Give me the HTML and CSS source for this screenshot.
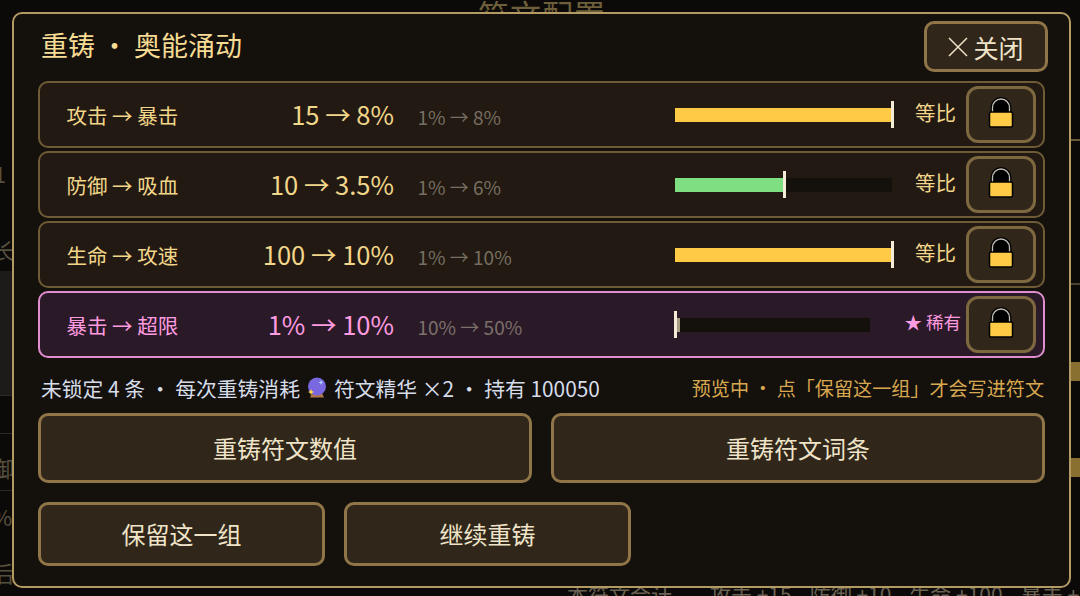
FILE: index.html
```html
<!DOCTYPE html>
<html lang="zh">
<head>
<meta charset="utf-8">
<title>重铸</title>
<link rel="stylesheet" href="styles.css">
</head>
<body>
<div class="backdrop">
  <div class="bg-title">符文配置</div>
  <div class="bg-panel"></div>
  <div class="bg-line l1"></div>
  <div class="bg-line l2"></div>
  <div class="bg-line l3"></div>
  <div class="bg-line r3"></div>
  <div class="bg-line r4"></div>
  <div class="bg-left b1">1</div>
  <div class="bg-left b2">长</div>
  <div class="bg-left b3">御</div>
  <div class="bg-left b4">%</div>
  <div class="bg-left b5">后</div>
  <div class="bg-bar r1"></div>
  <div class="bg-bar r2"></div>
  <div class="bg-sum">
    <span class="s0">本符文合计</span><span class="s1">攻击 +15</span><span class="s1">防御 +10</span><span class="s1">生命 +100</span><span class="s1">暴击 +</span>
  </div>
</div>
<main class="dialog">
  <header class="head">
    <h1 class="title">重铸 ・ 奥能涌动</h1>
    <button class="btn close"><svg class="x" viewBox="0 0 20 20"><path d="M1 1L19 19M19 1L1 19"/></svg>关闭</button>
  </header>
  <section class="rows">
    <div class="row">
      <span class="label">攻击 → 暴击</span><span class="val">15 → 8%</span><span class="range">1% → 8%</span>
      <span class="bar"><i class="fill gold w100"></i><i class="tick"></i></span>
      <span class="tag">等比</span>
      <button class="lock"><svg viewBox="0 0 26 30"><path class="shackle-o" d="M4.500 15V9.500a8.500 8.500 0 0 1 17 0V15z"/><path class="shackle" d="M4.500 14V9.500a8.500 8.500 0 0 1 17 0V14"/><rect class="body" x="1.500" y="14" width="23" height="15" rx="1.500"/></svg></button>
    </div>
    <div class="row">
      <span class="label">防御 → 吸血</span><span class="val">10 → 3.5%</span><span class="range">1% → 6%</span>
      <span class="bar"><i class="fill green w50"></i><i class="tick"></i></span>
      <span class="tag">等比</span>
      <button class="lock"><svg viewBox="0 0 26 30"><path class="shackle-o" d="M4.500 15V9.500a8.500 8.500 0 0 1 17 0V15z"/><path class="shackle" d="M4.500 14V9.500a8.500 8.500 0 0 1 17 0V14"/><rect class="body" x="1.500" y="14" width="23" height="15" rx="1.500"/></svg></button>
    </div>
    <div class="row">
      <span class="label">生命 → 攻速</span><span class="val">100 → 10%</span><span class="range">1% → 10%</span>
      <span class="bar"><i class="fill gold w100"></i><i class="tick"></i></span>
      <span class="tag">等比</span>
      <button class="lock"><svg viewBox="0 0 26 30"><path class="shackle-o" d="M4.500 15V9.500a8.500 8.500 0 0 1 17 0V15z"/><path class="shackle" d="M4.500 14V9.500a8.500 8.500 0 0 1 17 0V14"/><rect class="body" x="1.500" y="14" width="23" height="15" rx="1.500"/></svg></button>
    </div>
    <div class="row rare">
      <span class="label">暴击 → 超限</span><span class="val">1% → 10%</span><span class="range">10% → 50%</span>
      <span class="bar short"><i class="fill grey w0"></i><i class="tick"></i></span>
      <span class="tag">★ 稀有</span>
      <button class="lock"><svg viewBox="0 0 26 30"><path class="shackle-o" d="M4.500 15V9.500a8.500 8.500 0 0 1 17 0V15z"/><path class="shackle" d="M4.500 14V9.500a8.500 8.500 0 0 1 17 0V14"/><rect class="body" x="1.500" y="14" width="23" height="15" rx="1.500"/></svg></button>
    </div>
  </section>
  <div class="info">
    <span class="cost">未锁定 4 条 ・ 每次重铸消耗 <svg class="orb" viewBox="0 0 20 22"><path class="orb-base" d="M5 16h10l2 4.500H3z"/><circle class="orb-ball" cx="10" cy="9.500" r="9"/><path class="orb-shine" d="M14 3l.8 1.700 1.700.8-1.700.8L14 8l-.8-1.700-1.700-.8 1.700-.8z"/><path class="orb-spark" d="M4 12l.9 2.100 2.100.9-2.100.9L4 18l-.9-2.100L1 15l2.100-.9z"/></svg> 符文精华 ×2 ・ 持有 100050</span>
    <span class="note">预览中 ・ 点「保留这一组」才会写进符文</span>
  </div>
  <div class="actions">
    <button class="btn big">重铸符文数值</button>
    <button class="btn big">重铸符文词条</button>
  </div>
  <div class="actions second">
    <button class="btn mid">保留这一组</button>
    <button class="btn mid">继续重铸</button>
  </div>
</main>
</body>
</html>
```
FILE: styles.css
```css
* { box-sizing: border-box; }
html, body { margin: 0; height: 100%; }
body {
  width: 1080px; height: 596px; overflow: hidden; position: relative;
  background: #0c0a08;
  font-family: "Noto Sans CJK SC", "Noto Sans", sans-serif;
  color: #f2d68a;
}
.backdrop { position: absolute; inset: 0; overflow: hidden; }
.bg-title { position: absolute; left: 478px; top: -9px; font-size: 31px; letter-spacing: 1px; color: #6e5f3c; }
.bg-panel { position: absolute; left: 0; top: 271px; width: 12px; height: 124px; background: #1d1b19; }
.bg-line { position: absolute; height: 1px; background: #2c2822; }
.l1 { left: 0; width: 12px; top: 395px; }
.l2 { left: 0; width: 12px; top: 433px; }
.l3 { left: 0; width: 12px; top: 490px; }
.r3 { left: 1071px; width: 9px; top: 139px; height: 2px; background: #6b5a38; }
.r4 { left: 1071px; width: 9px; top: 283px; height: 2px; background: #4a4030; }
.bg-left { position: absolute; left: -8px; width: 20px; text-align: right; font-size: 22px; color: #57503f; line-height: 1; }
.b1 { top: 162px; left: -14px; }
.b2 { top: 238px; }
.b3 { top: 456px; }
.b4 { top: 505px; }
.b5 { top: 561px; }
.bg-bar { position: absolute; left: 1071px; width: 9px; background: #8a7030; }
.r1 { top: 362px; height: 19px; }
.r2 { top: 458px; height: 19px; }
.bg-sum { position: absolute; left: 567px; top: 579px; display: flex; font-size: 21px; line-height: 30px; color: #6a6252; white-space: nowrap; }
.s0 { margin-right: 38px; }
.s1 { margin-right: 18px; }

.dialog {
  position: absolute; left: 12px; top: 12px; width: 1059px; height: 576px;
  background: #14100c;
  border: 2px solid #b39a62; border-radius: 10px;
  padding: 7px 24px 0 24px;
  display: flex; flex-direction: column;
}
.head { display: flex; justify-content: space-between; align-items: flex-start; height: 60px; padding-left: 3px; }
.title { margin: 5px 0 0; font-size: 27px; line-height: 38px; font-weight: 400; color: #f7dc94; white-space: nowrap; }
button { font-family: inherit; color: #efe4c8; padding: 0; cursor: pointer; }
.btn { background: #30261a; border: 3px solid #907548; border-radius: 10px; display: flex; align-items: center; justify-content: center; }
.close { width: 124px; height: 51px; font-size: 25px; gap: 5px; margin-right: -3px; }
.x { width: 20px; height: 20px; fill: none; stroke: #efe4c8; stroke-width: 1.500; }

.rows { display: flex; flex-direction: column; gap: 3.500px; }
.row {
  height: 66.500px; display: flex; align-items: center;
  background: #221a12; border: 2px solid #6f5c36; border-radius: 10px;
  padding-left: 26.500px;
}
.label { width: 170px; font-size: 20.500px; color: #f2d68a; white-space: nowrap; position: relative; top: 1px; }
.val { width: 157.500px; text-align: right; font-size: 25.500px; color: #f2d68a; white-space: nowrap; position: relative; top: -1px; }
.range { width: 281px; padding-left: 23.500px; font-size: 19px; color: #766e60; white-space: nowrap; position: relative; top: 2px; }
.bar { position: relative; display: block; width: 217px; height: 14px; background: #14100c; margin-top: 1px; }
.bar.short { width: 195px; }
.fill { position: absolute; left: 0; top: 0; bottom: 0; display: block; }
.gold { background: #ffca45; }
.green { background: #7ddf82; }
.grey { background: #a89c80; }
.w100 { width: 100%; }
.w50 { width: 50%; }
.w0 { width: 5px; }
.tick { position: absolute; top: -6.500px; bottom: -6.500px; width: 3px; background: #f5ecd8; display: block; }
.w100 + .tick { left: calc(100% - 1.500px); }
.w50 + .tick { left: calc(50% - 1px); }
.w0 + .tick { left: -1px; }
.tag { margin-left: auto; font-size: 20.500px; color: #f2d68a; white-space: nowrap; position: relative; top: -2px; }
.lock {
  width: 70px; height: 57px; margin-left: 10px; margin-right: 7px;
  background: #30261a; border: 3.500px solid #7e6840; border-radius: 12px;
  display: flex; align-items: center; justify-content: center;
}
.lock svg { width: 26px; height: 30px; position: relative; top: -1px; overflow: visible; }
.shackle-o { fill: #000; stroke: #000; stroke-width: 4; }
.shackle { fill: none; stroke: #c4c0b8; stroke-width: 1.300; }
.body { fill: #ffca45; stroke: #000; stroke-width: 1.500; }

.rare { background: #2a1a28; border-color: #e08ed0; }
.rare .label, .rare .val, .rare .tag { color: #ff9be0; }
.rare .tag { font-size: 17.500px; top: -3px; }
.rare .lock { margin-left: 5px; }
.rare .range { color: #7c7068; }

.info { display: flex; justify-content: space-between; align-items: center; margin-top: 13px; margin-bottom: 1px; height: 34px; padding-left: 3px; padding-right: 1px; white-space: nowrap; }
.cost { color: #d6ddea; display: flex; align-items: center; gap: 7px; font-size: 20.800px; }
.orb { width: 20px; height: 22px; }
.orb-ball { fill: #7a68e0; }
.orb-base { fill: #b0784c; }
.orb-shine { fill: #a8d0ff; }
.orb-spark { fill: #ffd84c; }
.note { color: #d8a850; font-size: 19.100px; }
.actions { display: flex; gap: 19px; margin-top: 7px; }
.actions.second { gap: 19px; margin-top: 19px; }
.big { width: 494px; height: 70px; font-size: 24px; }
.mid { width: 287px; height: 64px; font-size: 24px; }
```
